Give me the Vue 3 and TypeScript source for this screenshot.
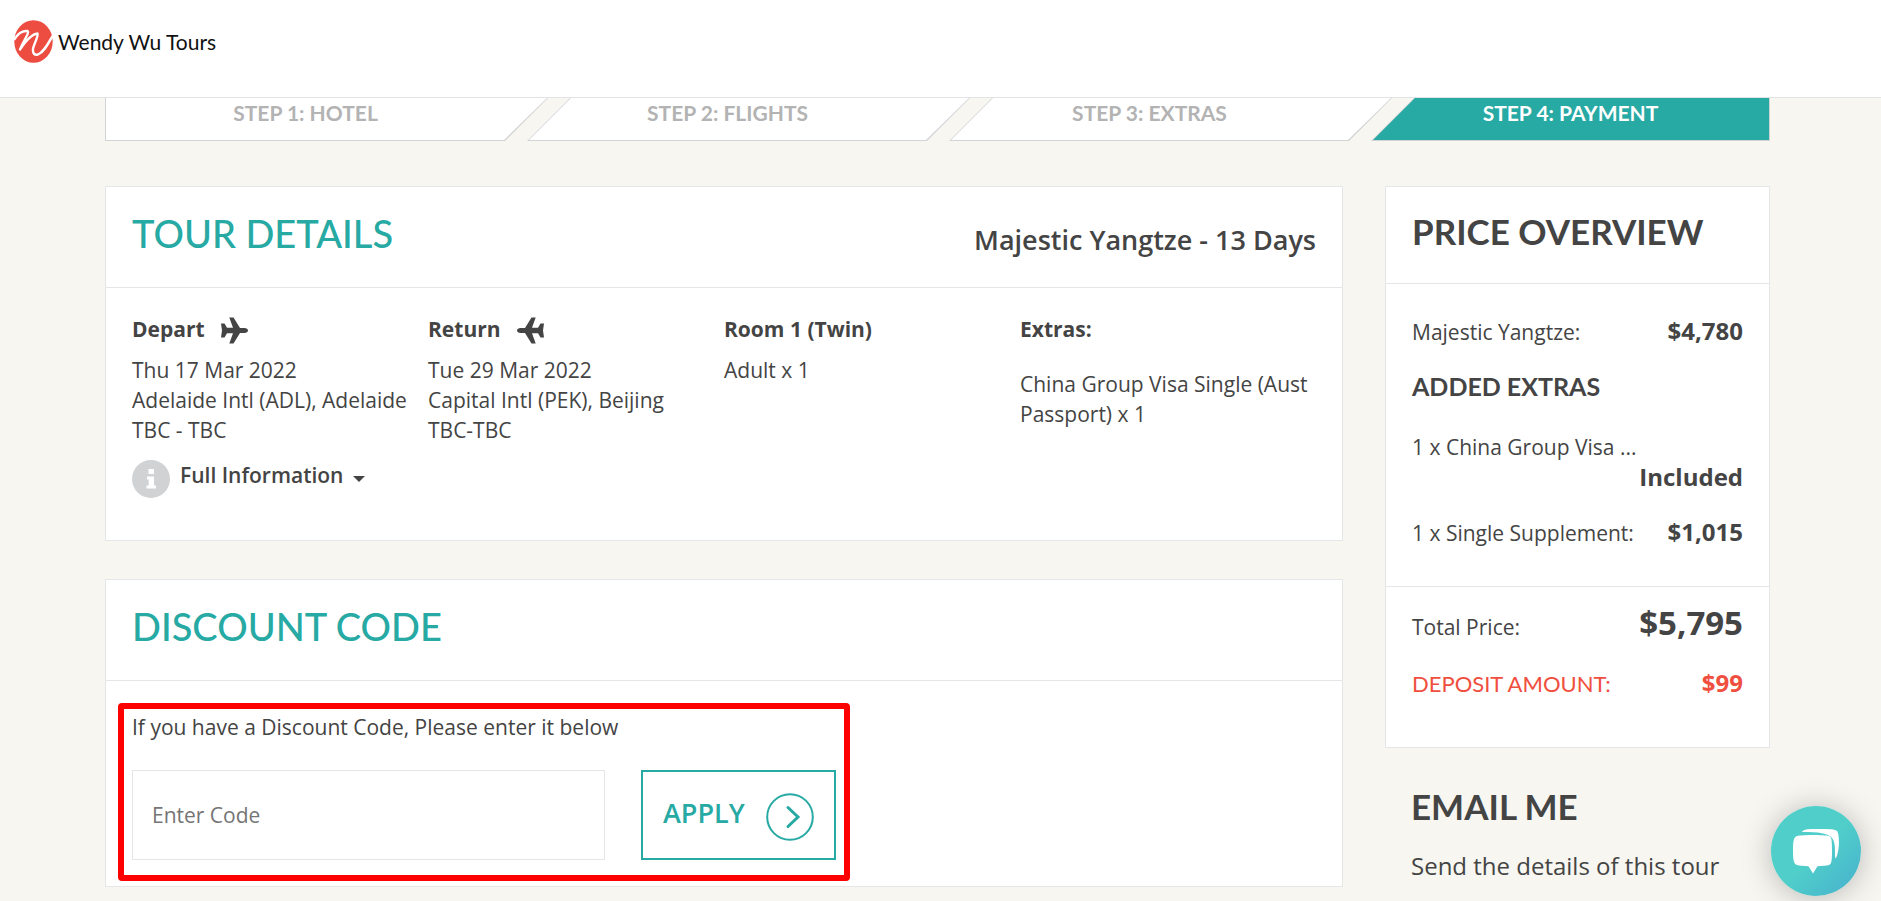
<script setup lang="ts">
const steps = [
  { label: 'STEP 1: HOTEL', active: false },
  { label: 'STEP 2: FLIGHTS', active: false },
  { label: 'STEP 3: EXTRAS', active: false },
  { label: 'STEP 4: PAYMENT', active: true },
]
const planePath =
  'M0 6.500h3.500L6 10.800h6L8.300.5h4.200L19 11h4.500c2 0 3.500 1 3.500 2.500S25.500 16 23.500 16H19l-6.500 10.500H8.300L12 16.200H6l-2.500 4.300H0l1-7z'
</script>

<template>
  <div class="page">
    <header class="topbar">
      <a class="brand" href="#">
        <svg class="brand-mark" viewBox="0 0 39 43" aria-hidden="true">
          <ellipse cx="19.500" cy="21.500" rx="19.200" ry="21.300" fill="#ed4c40" />
          <path
            d="M0 20C4 13 9 10.500 13.500 11 16 12 10 20 6 29.500 11 22 18 14 23.500 13.500 25 15 19.500 25 19 29c-.5 5 2 6.500 5 5.500C30 32 34 24 38.500 16"
            fill="none"
            stroke="#fff"
            stroke-width="2.400"
            stroke-linejoin="round"
          />
        </svg>
        <span>Wendy Wu Tours</span>
      </a>
    </header>

    <div class="container">
      <ol class="steps">
        <li v-for="s in steps" :key="s.label" :class="{ active: s.active }">
          <span>{{ s.label }}</span>
        </li>
      </ol>

      <div class="columns">
        <main>
          <section class="card tour">
            <div class="card-head">
              <h2>TOUR DETAILS</h2>
              <p class="tour-name">Majestic Yangtze - 13 Days</p>
            </div>
            <div class="tour-grid">
              <div>
                <h3>
                  Depart
                  <svg class="plane" viewBox="0 0 27 27" aria-hidden="true"><path :d="planePath" /></svg>
                </h3>
                <p>Thu 17 Mar 2022<br />Adelaide Intl (ADL), Adelaide<br />TBC - TBC</p>
                <button class="info" type="button">
                  <svg class="info-icon" viewBox="0 0 38 38" aria-hidden="true">
                    <circle cx="19" cy="19" r="19" fill="#d1d2d4" />
                    <path
                      d="M16.500 9h5.500v5h-5.500zM15 16.500h7V25.500h2V28.500h-9.500V25.500h2.200V19.500H15z"
                      fill="#fff"
                    />
                  </svg>
                  Full Information
                  <span class="caret"></span>
                </button>
              </div>
              <div>
                <h3>
                  Return
                  <svg class="plane back" viewBox="0 0 27 27" aria-hidden="true"><path :d="planePath" /></svg>
                </h3>
                <p>Tue 29 Mar 2022<br />Capital Intl (PEK), Beijing<br />TBC-TBC</p>
              </div>
              <div>
                <h3>Room 1 (Twin)</h3>
                <p>Adult x 1</p>
              </div>
              <div class="extras">
                <h3>Extras:</h3>
                <p>China Group Visa Single (Aust Passport) x 1</p>
              </div>
            </div>
          </section>

          <section class="card discount">
            <div class="card-head"><h2>DISCOUNT CODE</h2></div>
            <form class="code-form" @submit.prevent>
              <label for="code">If you have a Discount Code, Please enter it below</label>
              <div class="code-row">
                <input id="code" type="text" placeholder="Enter Code" />
                <button class="apply" type="submit">
                  <span>APPLY</span>
                  <svg viewBox="0 0 48 48" aria-hidden="true">
                    <circle cx="24" cy="24" r="22.800" />
                    <path d="M22 14.500 32 24 22 33.500" class="chev" />
                  </svg>
                </button>
              </div>
              <div class="highlight"></div>
            </form>
          </section>
        </main>

        <aside>
          <section class="card price">
            <div class="price-head"><h2>PRICE OVERVIEW</h2></div>
            <div class="price-body">
              <div class="row"><span>Majestic Yangtze:</span><strong>$4,780</strong></div>
              <h3>ADDED EXTRAS</h3>
              <div class="row wrap"><span>1 x China Group Visa ...</span><strong>Included</strong></div>
              <div class="row"><span>1 x Single Supplement:</span><strong>$1,015</strong></div>
            </div>
            <div class="price-total">
              <div class="row"><span>Total Price:</span><strong class="big">$5,795</strong></div>
              <div class="row deposit"><span>DEPOSIT AMOUNT:</span><strong>$99</strong></div>
            </div>
          </section>
          <section class="email">
            <h2>EMAIL ME</h2>
            <p>Send the details of this tour</p>
          </section>
        </aside>
      </div>
    </div>

    <button class="chat" type="button" aria-label="Open chat">
      <svg viewBox="0 0 90 90" aria-hidden="true">
        <path d="M31 26c1-2.500 4-3 17-3 16 0 18 .5 19 4 1.500 6 1.500 18-2 25h-1c0-8 .5-16-3-20-4-5-13-6-30-6z" />
        <path d="M26 30c6-1.300 26-1.300 32 0 2.500.8 3 4 3 14.500S60.500 58 58 59c-2.500.8-7 1-11.500 1.200L42 67.500l-4.500-7.300C33 60 28.500 59.800 26 59c-3-1-4-4-4-14.500S23 31 26 30z" />
      </svg>
    </button>
  </div>
</template>

<style>
body {
  margin: 0;
  background: #f7f6f1;
}
</style>

<style scoped>
* {
  box-sizing: border-box;
}
.page {
  height: 100vh;
  overflow: hidden;
  color: #444;
  background: #f7f6f1;
  font: 400 21px/30px 'Open Sans', 'Noto Sans', sans-serif;
}
h2,
h3,
p,
ol {
  margin: 0;
  padding: 0;
}
button {
  font: inherit;
  color: inherit;
  background: none;
  border: 0;
  padding: 0;
  cursor: pointer;
}
.topbar {
  height: 98px;
  padding: 20px 14px;
  background: #fff;
  border-bottom: 1px solid #e2e3e4;
}
.brand {
  display: inline-flex;
  align-items: center;
  gap: 5px;
  color: #111;
  text-decoration: none;
  font: 400 21px/43px Lato, sans-serif;
}
.brand-mark {
  width: 39px;
  height: 43px;
}
.container {
  padding: 0 111px 0 105px;
}
.steps {
  display: grid;
  grid-template-columns: 422fr 422fr 422fr 399fr;
  list-style: none;
  font: 700 21px/30px Lato, sans-serif;
  color: #b3b3b3;
}
.steps li {
  position: relative;
  height: 43px;
  margin-right: -21px;
  padding-right: 42px;
  text-align: center;
  background: #d1d3d4;
  clip-path: polygon(43px 0, 100% 0, calc(100% - 43px) 100%, 0 100%);
}
.steps li:first-child {
  clip-path: polygon(0 0, 100% 0, calc(100% - 43px) 100%, 0 100%);
}
.steps li::before {
  content: '';
  position: absolute;
  inset: 0 1px 1px;
  background: #fff;
  clip-path: polygon(43px 0, 100% 0, calc(100% - 43px) 100%, 1px 100%);
}
.steps li:first-child::before {
  clip-path: polygon(0 0, 100% 0, calc(100% - 43px) 100%, 0 100%);
}
.steps li.active {
  margin-right: 0;
  padding-right: 0;
  color: #fff;
  clip-path: polygon(43px 0, 100% 0, 100% 100%, 0 100%);
}
.steps li.active::before {
  background: #27a9a4;
  clip-path: polygon(43px 0, 100% 0, 100% 100%, 1px 100%);
}
.steps span {
  position: relative;
}
.columns {
  display: grid;
  grid-template-columns: 1238fr 385fr;
  gap: 42px;
  padding-top: 45px;
}
.card {
  background: #fff;
  border: 1px solid #e5e6e8;
}
.card-head {
  display: flex;
  align-items: center;
  justify-content: space-between;
  height: 101px;
  padding: 0 26px;
  border-bottom: 1px solid #e5e6e8;
}
.card-head h2 {
  padding-bottom: 8px;
  color: #27a9a4;
  font: 500 38px/44px Lato, sans-serif;
}
.tour-name {
  padding-top: 5px;
  font-size: 27px;
  font-weight: 600;
}
.tour-grid {
  display: grid;
  grid-template-columns: repeat(4, 1fr);
  padding: 26px 26px 42px;
}
.tour h3 {
  display: flex;
  align-items: center;
  gap: 16px;
  height: 30px;
  margin-bottom: 11px;
  font-size: 21px;
  font-weight: 700;
}
.extras p {
  padding-top: 14px;
}
.plane {
  width: 27px;
  height: 27px;
  margin-top: 2px;
  fill: #444;
}
.plane.back {
  transform: scaleX(-1);
}
.info {
  display: flex;
  gap: 10px;
  margin-top: 15px;
  font-weight: 600;
}
.info-icon {
  width: 38px;
  height: 38px;
}
.caret {
  align-self: center;
  border: 6px solid transparent;
  border-top-color: #444;
  border-bottom: 0;
}
.discount {
  margin-top: 38px;
}
.code-form {
  position: relative;
  padding: 31px 26px 26px;
}
.code-form label {
  display: block;
}
.code-row {
  display: flex;
  gap: 36px;
  margin-top: 28px;
}
.code-row input {
  width: 473px;
  height: 90px;
  padding: 0 19px;
  font: inherit;
  color: #444;
  background: #fff;
  border: 1px solid #e5e6e8;
  border-radius: 0;
}
.code-row input::placeholder {
  color: #757575;
}
.apply {
  display: flex;
  align-items: center;
  justify-content: space-between;
  width: 195px;
  height: 90px;
  padding: 0 20px;
  color: #27a9a4;
  border: 2px solid #27a9a4;
  font-size: 27px;
  font-weight: 600;
}
.apply span {
  padding-bottom: 5px;
}
.apply svg {
  width: 48px;
  height: 48px;
  margin-top: 4px;
  fill: none;
  stroke: #27a9a4;
  stroke-width: 2;
}
.apply .chev {
  stroke-width: 3;
  stroke-linecap: round;
}
.highlight {
  position: absolute;
  left: 12px;
  top: 22px;
  width: 732px;
  height: 178px;
  border: 6px solid #f00;
  border-radius: 4px;
  pointer-events: none;
}
.price-head {
  height: 97px;
  padding: 22px 26px;
  border-bottom: 1px solid #e5e6e8;
}
.price-head h2,
.email h2 {
  font: 700 35px/44px Lato, sans-serif;
}
.price-body {
  padding: 32px 26px 38px;
  border-bottom: 1px solid #e5e6e8;
}
.row {
  display: flex;
  align-items: baseline;
  justify-content: space-between;
}
.row strong {
  font-size: 24px;
}
.row.wrap {
  flex-wrap: wrap;
  margin-bottom: 25px;
}
.row.wrap strong {
  flex-basis: 100%;
  text-align: right;
}
.price-body h3 {
  margin: 24px 0 31px;
  font: 700 25px/30px Lato, sans-serif;
}
.price-total {
  padding: 21px 26px 48px;
}
.row strong.big {
  font-size: 33px;
}
.row.deposit {
  margin-top: 26px;
  color: #f04e3e;
}
.deposit span {
  font-family: Lato, sans-serif;
  font-size: 22px;
}
.email {
  padding: 36px 26px;
}
.email p {
  margin-top: 23px;
  font-size: 24px;
}
.chat {
  position: fixed;
  right: 20px;
  bottom: 5px;
  width: 90px;
  height: 90px;
  border-radius: 50%;
  background: linear-gradient(135deg, #50cfca 50%, #47afcd);
  box-shadow: 0 2px 30px rgba(0, 0, 0, 0.25);
}
.chat svg {
  display: block;
  width: 90px;
  height: 90px;
  fill: #fff;
}
</style>
